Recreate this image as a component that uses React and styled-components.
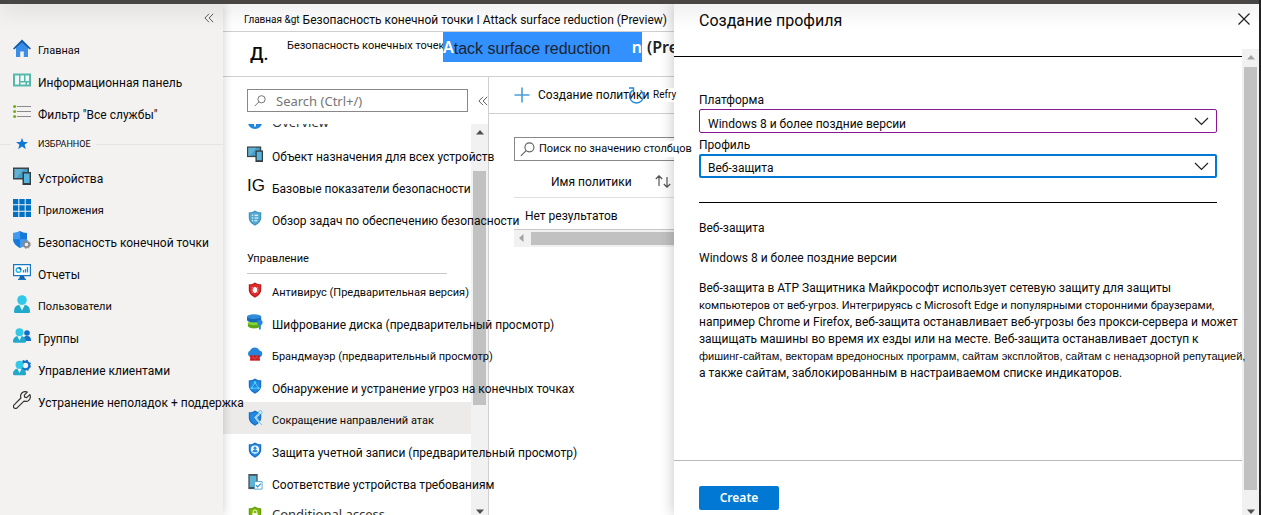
import React from "react";
import styled, { createGlobalStyle, css } from "styled-components";

const GlobalStyle = createGlobalStyle`
  *, *::before, *::after { box-sizing: border-box; }
  body { margin: 0; background: #232323; }
  body, button, input, select { font-family: Roboto, "Liberation Sans", sans-serif; font-size: 12px; line-height: 16px; color: #0a0a0a; }
  button { border: 0; padding: 0; background: none; cursor: pointer; }
  a { color: inherit; text-decoration: none; }
  svg { display: block; flex: none; }
`;

const Shell = styled.div`
  display: flex;
  flex-direction: column;
  height: 100vh;
  margin-right: 2px;
  overflow: hidden;
  background: #fff;
`;
const TopBar = styled.header`
  position: relative;
  z-index: 5;
  flex: none;
  height: 4px;
  background: #484644;
  box-shadow: 0 2px 22px rgba(0, 0, 0, 0.34);
`;
const Body = styled.div`
  display: flex;
  flex: 1;
  min-height: 0;
`;

/* ---------- left navigation ---------- */
const Sidebar = styled.nav`
  position: relative;
  z-index: 3;
  flex: none;
  width: 223px;
  background: #f3f2f1;
  box-shadow: 0 0 10px rgba(0, 0, 0, 0.2);
`;
const SidebarTop = styled.div`
  display: flex;
  justify-content: flex-end;
  align-items: center;
  height: 28px;
  padding-right: 9px;
`;
const List = styled.ul`
  list-style: none;
  margin: 0;
  padding: 0;
`;
const NavLink = styled.a`
  display: flex;
  align-items: center;
  gap: 7px;
  height: 32px;
  padding-left: 13px;
  white-space: nowrap;
`;
const NavText = styled.span`
  padding-top: 6px;
  font-size: ${(p) => (p.$small ? 11 : 12)}px;
`;
const Favorites = styled.h2`
  display: flex;
  align-items: center;
  gap: 5px;
  height: 32px;
  margin: 0;
  font-size: 9px;
  font-weight: 400;
  &::before, &::after { content: ""; height: 1px; background: #e6e4e2; }
  &::before { width: 11px; }
  &::after { flex: 1; }
`;
const FavoritesText = styled.span`
  padding-left: 5px;
`;

/* ---------- middle blade ---------- */
const Main = styled.main`
  display: flex;
  flex-direction: column;
  flex: 1;
  min-width: 0;
`;
const Breadcrumb = styled.nav`
  display: flex;
  align-items: center;
  gap: 3px;
  flex: none;
  height: 28px;
  padding: 5px 0 0 21px;
  border-bottom: 1px solid #cfcfcf;
  white-space: nowrap;
  overflow: hidden;
`;
const Crumb = styled.a`
  font-size: ${(p) => (p.$small ? 10 : 12)}px;
`;
const TitleBar = styled.div`
  display: flex;
  flex: none;
  height: 45px;
  padding-left: 27px;
  border-bottom: 1px solid #cfcfcf;
  white-space: nowrap;
  overflow: hidden;
`;
const Initial = styled.span`
  flex: none;
  width: 37px;
  padding-top: 12px;
  font-size: 18px;
  line-height: 20px;
  font-weight: 500;
`;
const TitleLead = styled.span`
  flex: none;
  width: 156px;
  padding-top: 6px;
  font-size: 11px;
`;
const Title = styled.h1`
  display: flex;
  margin: 0;
  font: 600 16px/30px "Noto Sans", sans-serif;
  color: #222;
`;
const Marked = styled.mark`
  display: flex;
  justify-content: space-between;
  width: 199px;
  height: 30px;
  margin-right: 5px;
  background: #3390ff;
  color: #fff;
`;
const MarkedText = styled.span`
  flex: 1;
  padding-top: 2px;
  font: 400 16px/30px "Liberation Sans", sans-serif;
  color: #1b2430;
`;
const Columns = styled.div`
  display: flex;
  flex: 1;
  min-height: 0;
`;
const Menu = styled.div`
  display: flex;
  flex-direction: column;
  flex: none;
  width: 266px;
  border-right: 1px solid #cfcfcf;
`;
const MenuSearch = styled.div`
  display: flex;
  align-items: center;
  gap: 7px;
  flex: none;
  height: 47px;
  padding: 0 3px 0 24px;
`;
const CollapseMenu = styled.button`
  display: flex;
  justify-content: center;
  width: 14px;
  margin-right: 4px;
`;
const SearchField = styled.label`
  display: flex;
  align-items: center;
  gap: 10px;
  flex: 1;
  height: 23px;
  margin-right: 3px;
  padding: 0 6px;
  border: 1px solid #8a8886;
`;
const MenuInput = styled.input`
  flex: 1;
  min-width: 0;
  border: 0;
  padding: 0;
  outline: 0;
  background: none;
  font: 13px/16px "Noto Sans", sans-serif;
  &::placeholder { color: #767676; opacity: 1; }
`;
const MenuScroll = styled.div`
  display: flex;
  flex: 1;
  min-height: 0;
  overflow-x: visible;
  overflow-y: clip;
`;
const MenuItems = styled(List)`
  flex: 1;
  min-width: 0;
  margin-top: -18px;
`;
const MenuLink = styled.a`
  display: flex;
  align-items: center;
  gap: 9px;
  height: 32px;
  padding-left: 24px;
  white-space: nowrap;
  background: ${(p) => (p.$active ? "#edebe9" : "none")};
`;
const MenuText = styled.span`
  position: relative;
  z-index: 2;
  padding-top: 5px;
  font-size: ${(p) => (p.$small ? 11 : 12)}px;
  ${(p) => p.$latin && css`
    padding-top: 0;
    font-family: "Noto Sans", sans-serif;
    font-size: 13px;
    color: #323130;
  `}
`;
const Letters = styled.span`
  width: 16px;
  font: 17px/20px "Liberation Sans", sans-serif;
`;
const MenuHeading = styled.h2`
  height: 40px;
  margin: 0 24px;
  padding-top: 17px;
  border-bottom: 1px solid #c8c8c8;
  font-size: 11px;
  font-weight: 400;
`;
const Scrollbar = styled.div`
  display: flex;
  flex: none;
  flex-direction: ${(p) => (p.$horizontal ? "row" : "column")};
  align-items: center;
  justify-content: space-between;
  background: #f1f1f1;
`;
const MenuBar = styled(Scrollbar)`
  width: 17px;
  padding: 6px 0 1px;
`;
const MenuThumb = styled.div`
  width: 13px;
  height: 61%;
  margin-bottom: 68px;
  background: #c1c1c1;
`;

/* ---------- policy list ---------- */
const Content = styled.section`
  flex: 1;
  min-width: 0;
`;
const Toolbar = styled.div`
  display: flex;
  align-items: center;
  height: 37px;
  padding-left: 25px;
  border-bottom: 1px solid #cfcfcf;
`;
const ToolButton = styled.button`
  display: flex;
  align-items: center;
  gap: 8px;
  width: ${(p) => p.$width}px;
  flex: none;
  white-space: nowrap;
`;
const RefreshLabel = styled.span`
  position: relative;
  z-index: 2;
  background: #fff;
  font-size: 10px;
  line-height: 14px;
`;
const Results = styled.div`
  padding: 23px 0 0 25px;
`;
const ColumnSearch = styled.label`
  display: flex;
  align-items: center;
  gap: 4px;
  height: 24px;
  padding-left: 5px;
  border: 1px solid #8a8886;
  border-right: 0;
`;
const ColumnInput = styled.input`
  position: relative;
  z-index: 2;
  flex: none;
  width: 155px;
  height: 16px;
  border: 0;
  padding: 0;
  outline: 0;
  background: #fff;
  font-size: 11px;
  &::placeholder { color: #0a0a0a; opacity: 1; }
`;
const Table = styled.table`
  width: 100%;
  border-collapse: collapse;
  text-align: left;
  white-space: nowrap;
`;
const Th = styled.th`
  height: 36px;
  padding: 6px 0 0 37px;
  border-bottom: 1px solid #e1dfdd;
  font-weight: 400;
`;
const HeadCell = styled.span`
  display: flex;
  align-items: center;
  justify-content: space-between;
  padding-right: 3px;
`;
const Td = styled.td`
  height: 32px;
  padding: 6px 0 0 11px;
  border-bottom: 1px solid #c8c8c8;
`;
const TableBar = styled(Scrollbar)`
  height: 17px;
  padding-left: 5px;
`;
const TableThumb = styled.div`
  flex: 1;
  height: 13px;
  margin-left: 7px;
  background: #c1c1c1;
`;

/* ---------- create profile panel ---------- */
const Panel = styled.aside`
  position: relative;
  z-index: 1;
  display: flex;
  flex: none;
  width: 585px;
  background: #fff;
  box-shadow: 0 0 14px rgba(0, 0, 0, 0.24);
`;
const PanelColumn = styled.div`
  display: flex;
  flex-direction: column;
  flex: 1;
  min-width: 0;
`;
const PanelHeader = styled.div`
  flex: none;
  height: 53px;
  padding: 7px 25px 0;
  border-bottom: 1px solid #000;
`;
const PanelTitle = styled.h2`
  margin: 0;
  font-size: 16px;
  line-height: 20px;
  font-weight: 400;
`;
const CloseButton = styled.button`
  position: absolute;
  top: 9px;
  right: 9px;
`;
const PanelBody = styled.form`
  flex: 1;
  min-height: 0;
  padding: 35px 0 0 25px;
`;
const Field = styled.div`
  display: flex;
  flex-direction: column;
  margin-right: 25px;
`;
const FieldLabel = styled.label`
  height: ${(p) => (p.$second ? 21 : 17)}px;
  padding-top: ${(p) => (p.$second ? 4 : 0)}px;
`;
const Picker = styled.div`
  display: grid;
  align-items: center;
  & > * { grid-area: 1 / 1; }
  & > svg { justify-self: end; margin-right: 8px; pointer-events: none; }
`;
const Select = styled.select`
  appearance: none;
  height: 24px;
  padding: ${(p) => (p.$focused ? "4px 30px 0 7px" : "5px 30px 0 8px")};
  border: ${(p) => (p.$focused ? "2px solid #0078d4" : "1px solid #881798")};
  border-radius: 2px;
  outline: 0;
  background: #fff;
`;
const Divider = styled.hr`
  height: 1px;
  margin: 24px 25px 17px 0;
  border: 0;
  background: #000;
`;
const Note = styled.p`
  margin: 0 0 14px;
`;
const Description = styled.p`
  position: relative;
  z-index: 1;
  margin: 0;
  line-height: 17px;
  white-space: nowrap;
`;
const Fine = styled.span`
  font-size: 11px;
  ${(p) => p.$narrow && css`font-family: "Liberation Sans", sans-serif;`}
`;
const PanelFooter = styled.div`
  flex: none;
  height: 55px;
  padding: 25px;
  border-top: 1px solid #b8b8b8;
`;
const Primary = styled.button`
  width: 80px;
  height: 24px;
  border-radius: 2px;
  background: #0078d4;
  color: #fff;
  font: 600 12px/22px "Noto Sans", sans-serif;
`;
const PanelBar = styled(Scrollbar)`
  width: 17px;
  margin-top: 45px;
  padding: 6px 0 1px;
`;
const PanelThumb = styled.div`
  flex: 1;
  width: 13px;
  margin: 7px 0 19px;
  background: #c1c1c1;
`;

/* ---------- icons ---------- */
const Svg = ({ s = 18, children }) => (
  <svg width={s} height={s} viewBox="0 0 18 18" fill="none" aria-hidden="true">{children}</svg>
);
const Chevrons = () => (
  <svg width="10" height="10" viewBox="0 0 10 10" fill="none" stroke="#605e5c" aria-hidden="true">
    <path d="M5 .8.9 5 5 9.2M9.2.8 5.1 5l4.1 4.2" />
  </svg>
);
const Magnifier = ({ s = 14 }) => (
  <svg width={s} height={s} viewBox="0 0 14 14" fill="none" stroke="#605e5c" aria-hidden="true">
    <circle cx="8.8" cy="5" r="4.2" /><path d="M5.7 8 .8 13" />
  </svg>
);
const Arrow = ({ dir = "up", color = "#505050" }) => (
  <svg width={dir === "left" ? 5 : 8} height={dir === "left" ? 8 : 5} viewBox={dir === "left" ? "0 0 5 8" : "0 0 8 5"} aria-hidden="true">
    <path fill={color} d={{ up: "M4 0 8 4.5H0Z", down: "M0 .5h8L4 5Z", left: "M4.5 0v8L0 4Z" }[dir]} />
  </svg>
);
const Chevron = () => (
  <svg width="15" height="9" viewBox="0 0 15 9" fill="none" stroke="#222" strokeWidth="1.2" aria-hidden="true">
    <path d="m1 1 6.5 6.5L14 1" />
  </svg>
);
const SHIELD = "M9 .5c2 1.5 4.200 2 7 2v6c0 4.500-3.500 7.500-7 9.200C5.500 16 2 13 2 8.500v-6c2.800 0 5-.5 7-2Z";

const Home = () => (
  <Svg>
    <path d="M3 8.500 9 3l6 5.500V18h-4.200v-5.500H7.200V18H3Z" fill="#3a8ee8" />
    <path d="M0 9.500 9 .6l9 8.900-1.300 1L9 3.500l-7.700 7Z" fill="#0f5ba8" />
  </Svg>
);
const Dashboard = () => (
  <Svg>
    <path d="M0 2.500h18v13H0Z" fill="#56b8a8" />
    <path d="M2 4.500h4v9H2ZM7.500 4.500H11V10H7.500ZM12.500 4.500H16V10h-3.500ZM7.500 11.500h5v2h-5ZM14 11.500h2v2h-2Z" fill="#effaf8" />
  </Svg>
);
const Services = () => (
  <Svg>
    <path d="M4 3.500h14M4 8.500h14M4 13.500h14" stroke="#8b8b8b" strokeWidth="1.200" />
    <circle cx="1.600" cy="3.500" r="1.500" fill="#6bb01b" /><circle cx="1.600" cy="8.500" r="1.500" fill="#6bb01b" /><circle cx="1.600" cy="13.500" r="1.500" fill="#6bb01b" />
  </Svg>
);
const Star = () => (
  <svg width="12" height="12" viewBox="0 0 12 12" aria-hidden="true">
    <path fill="#0f78d4" d="m6 0 1.600 4H12L8.600 6.800 9.800 11.200 6 8.600l-3.800 2.600L3.400 6.800 0 4h4.400Z" />
  </svg>
);
const Devices = ({ s }) => (
  <Svg s={s}>
    <path d="M0 .5h16v12H0Z" fill="#3b4349" /><path d="M1.500 2h13v9h-13Z" fill="#479fc8" /><path d="m1.500 2 9 0-7 9h-2Z" fill="#62b1d3" />
    <path d="M9.500 5h8.500v13H9.500Z" fill="#353c42" /><path d="M11 6.500h5.600v9.500H11Z" fill="#57b4dd" />
  </Svg>
);
const Apps = () => (
  <Svg><path fill="#0072c6" d="M0 0h5.300v5.300H0ZM6.300 0h5.400v5.300H6.300ZM12.700 0H18v5.300h-5.300ZM0 6.300h5.300v5.400H0ZM6.300 6.300h5.400v5.400H6.300ZM12.700 6.300H18v5.400h-5.300ZM0 12.700h5.300V18H0ZM6.300 12.700h5.400V18H6.300ZM12.700 12.700H18V18h-5.300Z" /></Svg>
);
const EndpointSecurity = () => (
  <Svg>
    <path d="M7 0c2 1.300 4.200 2 7 2v6c0 4-3 7-7 9-4-2-7-5-7-9V2c2.800 0 5-.7 7-2Z" fill="#1479d8" />
    <path d="M7 0C5 1.300 2.800 2 0 2v6.200h7ZM7 8.200h7c0 4-3 6.800-7 8.800Z" fill="#3f9bf0" />
    <circle cx="13.500" cy="13.500" r="2.700" stroke="#898989" strokeWidth="1.800" fill="#f3f2f1" />
    <circle cx="13.500" cy="13.500" r="3.900" stroke="#898989" strokeDasharray="1.500 1.560" />
  </Svg>
);
const Reports = () => (
  <Svg>
    <path d="M.6 1.600h16.800v11H.6Z" fill="#fff" stroke="#1679c8" strokeWidth="1.200" />
    <path d="M7 13h4l1 3H6Z" fill="#1464ac" /><path d="M5 15.800h8V17H5Z" fill="#1679c8" />
    <circle cx="5.500" cy="7" r="2.300" stroke="#28b6e8" strokeWidth="1.500" /><path d="M5.500 4.700A2.300 2.300 0 0 1 7.800 7" stroke="#0d66b8" strokeWidth="1.500" />
    <path d="M10.500 9.500V7M12.500 9.500V6M14.500 9.500V4" stroke="#1a8fd4" strokeWidth="1.300" />
  </Svg>
);
const User = () => (
  <Svg>
    <path d="M1 16.500C1 12 3.500 9.500 9 9.500s8 2.500 8 7c0 1-.6 1.500-1.500 1.500h-13C1.600 18 1 17.500 1 16.500Z" fill="#22a9c9" />
    <path d="m6 9.500 3 6 3-6Z" fill="#e2f8fc" /><circle cx="9" cy="5" r="4.800" fill="#30c8e8" />
  </Svg>
);
const Groups = () => (
  <Svg>
    <circle cx="14" cy="6" r="2.800" fill="#0f6fc8" /><path d="M10 14c0-3 1-5 4-5s4 2 4 4.500V14Z" fill="#1470c8" />
    <path d="M0 14.500C0 11 2 9 6.500 9S13 11 13 14.500c0 .8-.4 1.200-1.200 1.200H1.200C.4 15.700 0 15.300 0 14.500Z" fill="#22a9c9" />
    <path d="m4.300 9 2.200 4.500L8.700 9Z" fill="#e2f8fc" /><circle cx="6.500" cy="5.200" r="4" fill="#34c8e6" />
  </Svg>
);
const TenantAdmin = () => (
  <Svg>
    <circle cx="12.500" cy="6.500" r="3.800" stroke="#0f6fc8" strokeWidth="2.200" /><circle cx="12.500" cy="6.500" r="5.300" stroke="#0f6fc8" strokeDasharray="2 2.160" />
    <path d="M0 15C0 11.500 2 9.500 6.500 9.500S13 11.500 13 15c0 .8-.4 1.200-1.200 1.200H1.200C.4 16.200 0 15.800 0 15Z" fill="#22a9c9" />
    <path d="m4.300 9.500 2.200 4.500 2.200-4.500Z" fill="#e2f8fc" /><circle cx="6.500" cy="5.700" r="4" fill="#34c8e6" />
  </Svg>
);
const Wrench = () => (
  <Svg>
    <path d="M16.800 3.600 13.700 6.600 11.700 6.200 11.300 4.200 14.300 1.100C12.500.3 10.300.6 8.900 2 7.500 3.400 7.300 5.300 7.900 7L1.100 13.900a2.100 2.100 0 0 0 3 3L11 10.100c1.700.6 3.600.4 5-1 1.400-1.400 1.600-3.700.8-5.500Z" stroke="#333" strokeWidth="1.200" strokeLinejoin="round" />
  </Svg>
);
const Info = () => (
  <Svg s={16}><circle cx="9" cy="9" r="8" fill="#1f87dc" /><path d="M8 7.500h2V14H8ZM8 4h2v2H8Z" fill="#fff" /></Svg>
);
const ShieldIcon = ({ fill, dark, children }) => (
  <Svg s={16}><path d={SHIELD} fill={dark} /><path d="M9 2.200c1.600 1 3.400 1.600 5.600 1.700v4.600c0 3.600-2.600 6-5.600 7.600-3-1.600-5.600-4-5.600-7.600V3.900C5.600 3.800 7.400 3.200 9 2.200Z" fill={fill} />{children}</Svg>
);
const Tasks = () => (
  <ShieldIcon fill="#58acd4" dark="#3b94c0"><path d="M8.500 6h4M8.500 9h4M8.500 12h3M5.500 6h1.400M5.500 9h1.400M5.500 12h1.400" stroke="#fff" strokeWidth="1.200" /></ShieldIcon>
);
const Antivirus = () => (
  <ShieldIcon fill="#e02b2b" dark="#bd1c1c"><ellipse cx="9" cy="9" rx="2.300" ry="3.300" fill="#fff" /><path d="m5.500 6 7 6M12.500 6l-7 6M5 9h8" stroke="#fff" strokeWidth=".6" /></ShieldIcon>
);
const Disk = () => (
  <Svg s={16}>
    <path d="M1 10v3c0 2 3 3.200 7 3.200s7-1.200 7-3.200v-3Z" fill="#5ea51b" /><ellipse cx="8" cy="10" rx="7" ry="2.600" fill="#86d633" />
    <path d="M0 3v3.500c0 2 3.500 3 8 3s8-1 8-3V3Z" fill="#1769b8" /><ellipse cx="8" cy="3" rx="8" ry="2.600" fill="#2e8cdb" />
    <circle cx="14.500" cy="9.500" r="3" fill="#2585e0" /><path d="M13.500 11h2v6.500h-2Z" fill="#2585e0" />
  </Svg>
);
const Firewall = () => (
  <Svg s={16}>
    <path d="M4 12.500A4 4 0 0 1 3.500 5 5.800 5.800 0 0 1 14 5 3.800 3.800 0 0 1 14 12.500Z" fill="#2785d8" />
    <path d="M3.500 10.500h11v6h-11Z" fill="#c8191f" /><path d="M3.500 13.500h11M7 10.500v3M11 10.500v3M9 13.500v3" stroke="#f07070" strokeWidth=".5" />
  </Svg>
);
const Detection = () => (
  <ShieldIcon fill="#2487e0" dark="#1670c8"><path d="m9 5-4 6.500h8Z" stroke="#50d5ff" /><circle cx="9" cy="5" r="1.400" fill="#50d5ff" /><circle cx="5" cy="11.500" r="1.300" fill="#50d5ff" /><circle cx="13" cy="11.500" r="1.300" fill="#50d5ff" /></ShieldIcon>
);
const AttackSurface = () => (
  <ShieldIcon fill="#2487e0" dark="#1670c8"><path d="m14 4-4.500 4.500 7 8.500" stroke="#edebe9" strokeWidth="2" /><path d="M14 3.500 9.500 8.500 17 17" stroke="#50c8f4" /><circle cx="15" cy="2.600" r="2" stroke="#50c8f4" fill="#edebe9" /></ShieldIcon>
);
const Account = () => (
  <ShieldIcon fill="#2b90e6" dark="#1670c8"><circle cx="9" cy="8.500" r="4.600" fill="#fff" /><circle cx="9" cy="6.900" r="1.700" fill="#2b90e6" /><path d="M6 11.500c0-2 1-3 3-3s3 1 3 3Z" fill="#2b90e6" /></ShieldIcon>
);
const Compliance = () => (
  <Svg s={16}>
    <path d="M1.500 0h10.500v17H1.500Z" fill="#47525a" /><path d="M3 2h7.500v12.500H3Z" fill="#5db3d5" />
    <path d="M8.500 8.500h8.500V17H8.500Z" fill="#fff" stroke="#4ca3cf" /><path d="m10 12.500 2 2 3.500-3.700" stroke="#2b8cc8" strokeWidth="1.300" />
  </Svg>
);
const Conditional = () => (
  <ShieldIcon fill="#7fba00" dark="#5e9c0c"><path d="M6 8h6v4H6Z" fill="#fff" /><path d="M7 8V6.500a2 2 0 0 1 4 0V8" stroke="#fff" /></ShieldIcon>
);
const Plus = () => (
  <svg width="16" height="16" viewBox="0 0 16 16" stroke="#4a9ddb" strokeWidth="1.600" aria-hidden="true"><path d="M8 .5v15M.5 8h15" /></svg>
);
const Refresh = () => (
  <svg width="17" height="17" viewBox="0 0 17 17" fill="none" stroke="#1b86d8" strokeWidth="1.400" aria-hidden="true">
    <path d="M4.500 3.200a7 7 0 1 0 8 0M1 1h4.500v4.500" />
  </svg>
);
const Sort = () => (
  <svg width="16" height="13" viewBox="0 0 16 13" fill="none" stroke="#555" strokeWidth="1.200" aria-hidden="true">
    <path d="M4 11V.8M.8 4 4 .8 7.200 4M12 2v10.200M8.800 9 12 12.200 15.200 9" />
  </svg>
);
const Cross = () => (
  <svg width="12" height="12" viewBox="0 0 12 12" stroke="#222" strokeWidth="1.200" aria-hidden="true"><path d="m.5.5 11 11M11.500.5l-11 11" /></svg>
);

const topLinks = [
  [Home, "Главная", true],
  [Dashboard, "Информационная панель"],
  [Services, "Фильтр \"Все службы\""],
];
const favoriteLinks = [
  [Devices, "Устройства"],
  [Apps, "Приложения", true],
  [EndpointSecurity, "Безопасность конечной точки"],
  [Reports, "Отчеты"],
  [User, "Пользователи", true],
  [Groups, "Группы"],
  [TenantAdmin, "Управление клиентами"],
  [Wrench, "Устранение неполадок + поддержка"],
];
const manageLinks = [
  [Antivirus, "Антивирус (Предварительная версия)", { $small: true }],
  [Disk, "Шифрование диска (предварительный просмотр)"],
  [Firewall, "Брандмауэр (предварительный просмотр)", { $small: true }],
  [Detection, "Обнаружение и устранение угроз на конечных точках"],
  [AttackSurface, "Сокращение направлений атак", { $small: true, active: true }],
  [Account, "Защита учетной записи (предварительный просмотр)"],
  [Compliance, "Соответствие устройства требованиям"],
  [Conditional, "Conditional access", { $latin: true }],
];

const NavItem = ({ icon: Icon, text, small }) => (
  <li><NavLink href="#"><Icon /><NavText $small={small}>{text}</NavText></NavLink></li>
);
const MenuItem = ({ icon, text, active, ...look }) => (
  <li><MenuLink href="#" $active={active}>{icon}<MenuText {...look}>{text}</MenuText></MenuLink></li>
);

export default function App() {
  return (
    <>
      <GlobalStyle />
      <Shell>
        <TopBar />
        <Body>
          <Sidebar>
            <SidebarTop><button aria-label="Свернуть"><Chevrons /></button></SidebarTop>
            <List>{topLinks.map(([icon, text, small]) => <NavItem key={text} icon={icon} text={text} small={small} />)}</List>
            <Favorites><Star /><FavoritesText>ИЗБРАННОЕ</FavoritesText></Favorites>
            <List>{favoriteLinks.map(([icon, text, small]) => <NavItem key={text} icon={icon} text={text} small={small} />)}</List>
          </Sidebar>

          <Main>
            <Breadcrumb>
              <Crumb href="#" $small>Главная &amp;gt</Crumb>
              <Crumb href="#">Безопасность конечной точки I Attack surface reduction (Preview)</Crumb>
            </Breadcrumb>
            <TitleBar>
              <Initial>Д.</Initial>
              <TitleLead>Безопасность конечных точек</TitleLead>
              <Title><Marked>A<MarkedText>tack surface reduction</MarkedText>n</Marked>(Preview)</Title>
            </TitleBar>
            <Columns>
              <Menu>
                <MenuSearch>
                  <SearchField><Magnifier s={12} /><MenuInput aria-label="Search" placeholder="Search (Ctrl+/)" /></SearchField>
                  <CollapseMenu aria-label="Свернуть меню"><Chevrons /></CollapseMenu>
                </MenuSearch>
                <MenuScroll>
                  <MenuItems>
                    <MenuItem icon={<Info />} text="Overview" $latin />
                    <MenuItem icon={<Devices s={16} />} text="Объект назначения для всех устройств" />
                    <MenuItem icon={<Letters>IG</Letters>} text="Базовые показатели безопасности" />
                    <MenuItem icon={<Tasks />} text="Обзор задач по обеспечению безопасности" />
                    <li><MenuHeading>Управление</MenuHeading></li>
                    {manageLinks.map(([Icon, text, look]) => <MenuItem key={text} icon={<Icon />} text={text} {...look} />)}
                  </MenuItems>
                  <MenuBar><Arrow /><MenuThumb /><Arrow dir="down" /></MenuBar>
                </MenuScroll>
              </Menu>
              <Content>
                <Toolbar>
                  <ToolButton $width={114}><Plus />Создание политики</ToolButton>
                  <ToolButton $width={48}><Refresh /><RefreshLabel>Refry</RefreshLabel></ToolButton>
                </Toolbar>
                <Results>
                  <ColumnSearch><Magnifier s={15} /><ColumnInput aria-label="Поиск" placeholder="Поиск по значению столбцов" /></ColumnSearch>
                  <Table>
                    <thead><tr><Th><HeadCell>Имя политики<Sort /></HeadCell></Th></tr></thead>
                    <tbody><tr><Td>Нет результатов</Td></tr></tbody>
                  </Table>
                  <TableBar $horizontal><Arrow dir="left" color="#a3a3a3" /><TableThumb /></TableBar>
                </Results>
              </Content>
            </Columns>
          </Main>

          <Panel>
            <PanelColumn>
              <PanelHeader><PanelTitle>Создание профиля</PanelTitle></PanelHeader>
              <PanelBody>
                <Field>
                  <FieldLabel htmlFor="platform">Платформа</FieldLabel>
                  <Picker><Select id="platform"><option>Windows 8 и более поздние версии</option></Select><Chevron /></Picker>
                  <FieldLabel htmlFor="profile" $second>Профиль</FieldLabel>
                  <Picker><Select id="profile" $focused><option>Веб-защита</option></Select><Chevron /></Picker>
                </Field>
                <Divider />
                <Note>Веб-защита</Note>
                <Note>Windows 8 и более поздние версии</Note>
                <Description>
                  Веб-защита в ATP Защитника Майкрософт использует сетевую защиту для защиты<br />
                  <Fine>компьютеров от веб-угроз. Интегрируясь с Microsoft Edge и популярными сторонними браузерами,</Fine><br />
                  например Chrome и Firefox, веб-защита останавливает веб-угрозы без прокси-сервера и может<br />
                  защищать машины во время их езды или на месте. Веб-защита останавливает доступ к<br />
                  <Fine $narrow>фишинг-сайтам, векторам вредоносных программ, сайтам эксплойтов, сайтам с ненадзорной репутацией,</Fine><br />
                  а также сайтам, заблокированным в настраиваемом списке индикаторов.
                </Description>
              </PanelBody>
              <PanelFooter><Primary type="button">Create</Primary></PanelFooter>
            </PanelColumn>
            <PanelBar><Arrow color="#a3a3a3" /><PanelThumb /><Arrow dir="down" /></PanelBar>
            <CloseButton aria-label="Закрыть"><Cross /></CloseButton>
          </Panel>
        </Body>
      </Shell>
    </>
  );
}
